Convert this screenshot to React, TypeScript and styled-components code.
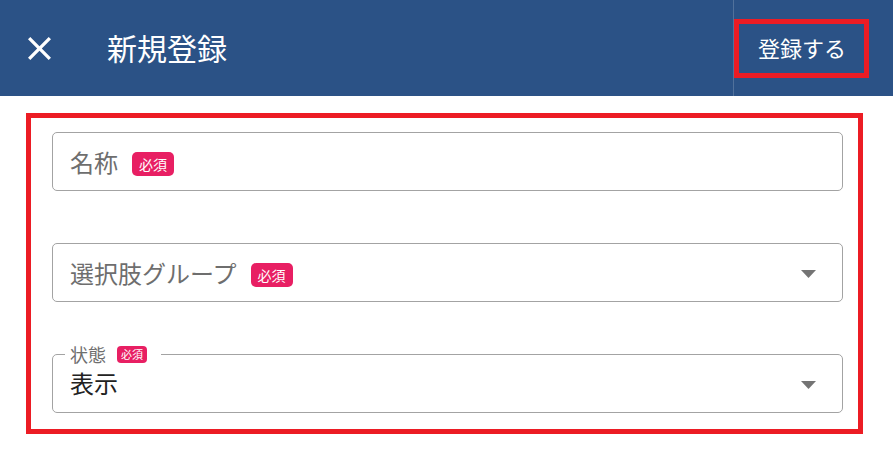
import React from "react";
import styled, { createGlobalStyle } from "styled-components";

const Global = createGlobalStyle`
  html, body { margin: 0; padding: 0; background: #ffffff; }
  body { font-family: "Noto Sans CJK JP", "Noto Sans", sans-serif; }
  * { box-sizing: border-box; }
`;

const Header = styled.header`
  height: 96px;
  background: #2b5286;
  display: flex;
  align-items: center;
  padding-left: 28px;
  padding-right: 24px;
  color: #ffffff;
`;

const CloseButton = styled.button`
  width: 23px;
  height: 23px;
  padding: 0;
  margin: 1px 0 0 0;
  border: none;
  background: transparent;
  display: flex;
  color: #ffffff;
`;

const Title = styled.h1`
  margin: 0 0 2px 56px;
  font-size: 30px;
  font-weight: 400;
  line-height: 1;
  flex: 1;
`;

const Divider = styled.div`
  align-self: stretch;
  width: 1px;
  background: rgba(255, 255, 255, 0.18);
`;

const ActionButton = styled.button`
  height: 59px;
  border: 5px solid #ec1c24;
  background: transparent;
  color: #ffffff;
  font-family: inherit;
  font-size: 22px;
  line-height: 1;
  padding: 0 18px 2px 19px;
`;

const Highlight = styled.section`
  margin: 17px 30px 0 26px;
  border: 5px solid #ec1c24;
  padding: 14px 15px 16px 21px;
  display: flex;
  flex-direction: column;
`;

const Field = styled.div<{ $mt?: number }>`
  height: 59px;
  margin-top: ${(p) => p.$mt ?? 0}px;
  border: 1px solid #a3a3a3;
  border-radius: 5px;
  display: flex;
  align-items: center;
  padding: 0 26px 0 17px;
`;

const Label = styled.span`
  font-size: 24px;
  color: #6e6e6e;
  line-height: 1;
`;

const Chip = styled.span<{ $small?: boolean }>`
  display: inline-flex;
  align-items: center;
  justify-content: center;
  background: #e81f63;
  color: #ffffff;
  border-radius: ${(p) => (p.$small ? 4 : 5)}px;
  height: ${(p) => (p.$small ? 17 : 24)}px;
  padding: 0 ${(p) => (p.$small ? 4 : 7)}px;
  font-size: ${(p) => (p.$small ? 11 : 14)}px;
  line-height: 1;
  margin-left: ${(p) => (p.$small ? 11 : 14)}px;
  margin-top: ${(p) => (p.$small ? 0 : 4)}px;
`;

const Spacer = styled.div`
  flex: 1;
`;

const Arrow = styled.svg`
  width: 15px;
  height: 8px;
  margin-top: 3px;
  flex: none;
`;

const Fieldset = styled.fieldset`
  margin: 43px 0 0 0;
  border: 1px solid #a3a3a3;
  border-radius: 5px;
  padding: 7px 26px 16px 12px;
  min-width: 0;
  display: flex;
  align-items: center;
`;

const Legend = styled.legend`
  padding: 0 14px 0 5px;
  height: 18px;
  display: flex;
  align-items: center;
  font-size: 18px;
  line-height: 18px;
  color: #6e6e6e;
`;

const Value = styled.span`
  font-size: 24px;
  line-height: 26px;
  color: #222222;
  padding-left: 5px;
`;

const FieldRow = styled.div`
  display: flex;
  align-items: center;
  width: 100%;
`;

const DropArrow = () => (
  <Arrow viewBox="0 0 15 8">
    <polygon points="0,0 15,0 7.5,8" fill="#747474" />
  </Arrow>
);

export default function App() {
  return (
    <>
      <Global />
      <Header>
        <CloseButton aria-label="close">
          <svg width="23" height="23" viewBox="5 5 14 14">
            <path
              fill="#ffffff"
              d="M19 6.41 17.59 5 12 10.59 6.41 5 5 6.41 10.59 12 5 17.59 6.41 19 12 13.41 17.59 19 19 17.59 13.41 12z"
            />
          </svg>
        </CloseButton>
        <Title>新規登録</Title>
        <Divider />
        <ActionButton>登録する</ActionButton>
      </Header>
      <Highlight>
        <Field>
          <Label>名称</Label>
          <Chip>必須</Chip>
        </Field>
        <Field $mt={52}>
          <Label>選択肢グループ</Label>
          <Chip>必須</Chip>
          <Spacer />
          <DropArrow />
        </Field>
        <Fieldset>
          <Legend>
            状態<Chip $small>必須</Chip>
          </Legend>
          <FieldRow>
            <Value>表示</Value>
            <Spacer />
            <DropArrow />
          </FieldRow>
        </Fieldset>
      </Highlight>
    </>
  );
}
